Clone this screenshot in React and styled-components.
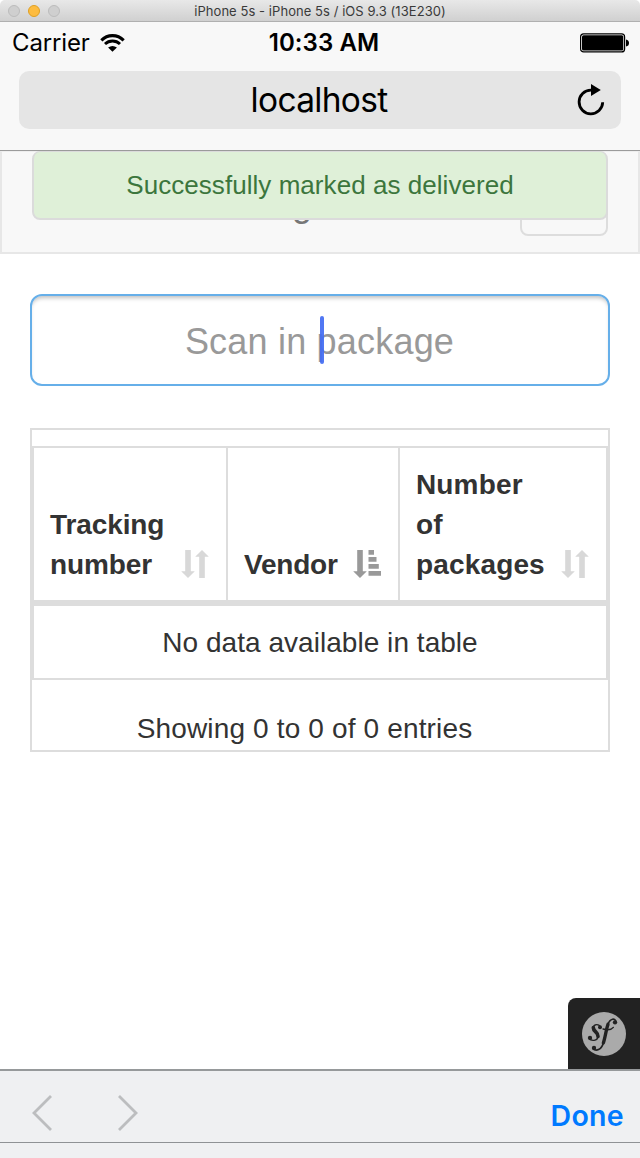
import React from "react";
import styled, { createGlobalStyle } from "styled-components";

const GlobalStyle = createGlobalStyle`
  * { box-sizing: border-box; }
  body { margin: 0; background: #fff; }
`;

const system = `Inter, "Liberation Sans", sans-serif`;
const helvetica = `"Liberation Sans", Arial, sans-serif`;

const Device = styled.main`
  width: 640px;
  height: 1158px;
  display: flex;
  flex-direction: column;
  overflow: hidden;
  background: #fff;
  color: #333;
  font-family: ${helvetica};
  white-space: nowrap;
`;

const TitleBar = styled.header`
  height: 22px;
  flex: none;
  display: grid;
  grid-template-columns: 68px 1fr 76px;
  align-items: center;
  padding: 1px 0 0 8px;
  border-bottom: 1px solid #b0b0b0;
  border-radius: 5px 5px 0 0;
  background: linear-gradient(#e8e8e8, #d0d0d0);
`;

const Lights = styled.div`
  display: flex;
  gap: 8px;
`;

const Light = styled.span`
  width: 12px;
  height: 12px;
  border-radius: 50%;
  border: 1px solid ${(p) => (p.$on ? "#dfa023" : "#bcbcbc")};
  background: ${(p) => (p.$on ? "#fdbc40" : "#cfcfcf")};
`;

const WindowTitle = styled.div`
  text-align: center;
  font: 400 13px/20px ${system};
  letter-spacing: 0.06px;
  color: #3a3a3a;
`;

const StatusBar = styled.div`
  height: 42px;
  flex: none;
  display: grid;
  grid-template-columns: 1fr auto 1fr;
  align-items: center;
  padding: 0 11px 0 12px;
  background: #f8f8f8;
  color: #000;
  font: 400 24px/42px ${system};
`;

const Carrier = styled.div`
  display: flex;
  align-items: center;
  gap: 10px;
  letter-spacing: -0.15px;
  svg { margin-bottom: 1px; }
`;

const Clock = styled.div`
  margin-left: 7px;
  font-weight: 600;
  letter-spacing: 0.1px;
`;

const Battery = styled.svg`
  justify-self: end;
`;

const AddressArea = styled.div`
  height: 87px;
  flex: none;
  padding: 7px 19px 0;
  background: #f8f8f8;
  border-bottom: 1px solid #9b9b9b;
`;

const AddressField = styled.div`
  height: 58px;
  display: grid;
  grid-template-columns: 60px 1fr 60px;
  align-items: center;
  border-radius: 10px;
  background: #e5e5e5;
  color: #000;
  svg { justify-self: end; margin: 0 16px 1px 0; }
`;

const Host = styled.div`
  grid-column: 2;
  text-align: center;
  font: 400 33.5px/58px ${system};
  letter-spacing: -0.7px;
  padding-right: 2px;
`;

const Page = styled.section`
  position: relative;
  height: 918px;
  flex: none;
  overflow: hidden;
`;

const Navbar = styled.nav`
  height: 103px;
  display: grid;
  grid-template-columns: 1fr auto 1fr;
  align-items: start;
  padding: 0 30px;
  border: 2px solid #e7e7e7;
  border-top: 1px solid #eee;
  background: #f8f8f8;
`;

const Brand = styled.span`
  grid-column: 2;
  margin: 28px 36px 0 0;
  font-size: 36px;
  line-height: 48px;
  color: #777;
`;

const NavToggle = styled.span`
  justify-self: end;
  width: 88px;
  height: 68px;
  margin-top: 16px;
  border: 2px solid #ddd;
  border-radius: 8px;
`;

const Alert = styled.div`
  position: absolute;
  top: 0;
  left: 32px;
  right: 32px;
  height: 69px;
  border: 2px solid #dbdbdb;
  border-top-width: 1px;
  border-radius: 8px;
  background: #dff0d8;
  color: #3c763d;
  text-align: center;
  font-size: 26px;
  line-height: 67px;
  letter-spacing: 0.05px;
`;

const ScanField = styled.div`
  position: relative;
  height: 92px;
  margin: 40px 30px 42px;
  border: 2px solid #66afe9;
  border-radius: 12px;
  box-shadow: inset 0 4px 4px -2px rgba(0, 0, 0, 0.25);
  color: #999;
  text-align: center;
  font-size: 36px;
  line-height: 92px;
  letter-spacing: 0.2px;
  padding-right: 1px;
`;

const Caret = styled.span`
  position: absolute;
  left: 288px;
  top: 20px;
  width: 4px;
  height: 48px;
  border-radius: 2px;
  background: rgba(66, 107, 242, 0.92);
`;

const TablePanel = styled.div`
  height: 324px;
  margin: 0 30px;
  padding-top: 16px;
  border: 2px solid #ddd;
`;

const Table = styled.div`
  border: 2px solid #ddd;
`;

const HeadRow = styled.div`
  display: grid;
  grid-template-columns: 194px 172px 206px;
  height: 158px;
  border-bottom: 6px solid #ddd;
`;

const HeadCell = styled.div`
  display: flex;
  align-items: flex-end;
  justify-content: space-between;
  padding: 0 ${(p) => (p.$last ? 17.5 : 17.5)}px 15px 16px;
  border-right: ${(p) => (p.$last ? 0 : 2)}px solid #ddd;
  font-size: 28px;
  font-weight: 700;
  line-height: 40px;
  letter-spacing: ${(p) => p.$track || "0"};
  svg { margin-bottom: 7px; flex: none; }
`;

const EmptyRow = styled.div`
  height: 72px;
  text-align: center;
  font-size: 28px;
  line-height: 73px;
  letter-spacing: 0.04px;
`;

const TableInfo = styled.div`
  padding-right: 31px;
  text-align: center;
  font-size: 28px;
  line-height: 98px;
  letter-spacing: 0.15px;
`;

const DebugBadge = styled.div`
  position: absolute;
  right: 0;
  bottom: 0;
  width: 72px;
  height: 71px;
  display: grid;
  place-items: center;
  border-radius: 8px 0 0 0;
  background: #222;
`;

const FormBar = styled.div`
  height: 74px;
  flex: none;
  display: flex;
  align-items: center;
  padding: 12px 16px 0 32px;
  border-top: 2px solid #96999b;
  border-bottom: 1px solid #8f9295;
  background: #eff0f2;
`;

const Arrow = styled.svg`
  margin-right: 66px;
`;

const Done = styled.span`
  margin-left: auto;
  padding-top: 6px;
  color: #007aff;
  font: 600 28.5px/40px ${system};
  letter-spacing: 0.3px;
`;

const KeyboardEdge = styled.div`
  flex: 1;
  background: #eff0f2;
`;

function SortIcon() {
  return (
    <svg width="28" height="28" viewBox="0 0 28 28" fill="#d8d8d8">
      <path d="M4.2 0h5.6v21.3h4L7 28 .2 21.3h4zM21 0l6.8 6.7h-4V28h-5.6V6.7h-4z" />
    </svg>
  );
}

function SortedIcon() {
  return (
    <svg width="28" height="28" viewBox="0 0 28 28" fill="#999">
      <path d="M4.2 0h5.6v21.3h4L7 28 .2 21.3h4zM15.5 0h5.5v4.7h-5.5zM15.5 7h8v4.7h-8zM15.5 14h10.3v4.7H15.5zM15.5 21H28v4.7H15.5z" />
    </svg>
  );
}

function WifiIcon() {
  return (
    <svg width="25" height="20" viewBox="0 0 26 20" fill="none" stroke="#000">
      <path d="M1.4 7.2C7.8.7 18.2.7 24.6 7.2" strokeWidth="3.2" />
      <path d="M5.2 11.1c4.3-4.2 11.3-4.2 15.6 0" strokeWidth="3" />
      <path d="M13 19l-4.6-4.4q4.6-3.2 9.2 0z" fill="#000" stroke="none" />
    </svg>
  );
}

function ReloadIcon() {
  return (
    <svg width="28" height="32" viewBox="0 0 28 32">
      <path d="M14 6.2A11.8 11.8 0 1 0 25.7 18.3" fill="none" stroke="#000" strokeWidth="2.8" />
      <path d="M14 0l9.8 6L14 12z" />
    </svg>
  );
}

function SymfonyLogo() {
  return (
    <svg width="44" height="44" viewBox="18 18 132 132" fill="none" stroke="#222" strokeLinecap="round">
      <circle cx="84" cy="84" r="66" fill="#aaa" stroke="none" />
      <path d="M73 64C70 53 53 53 52 65" strokeWidth="4" />
      <path d="M52 65C52 77 67 79 66 91" strokeWidth="11" />
      <path d="M66 91C65 106 44 106 41 97" strokeWidth="4" />
      <path d="M120 48C118 35 102 37 96 55" strokeWidth="5" />
      <path d="M96 55C90 72 88 94 82 111" strokeWidth="10" />
      <path d="M82 111C76 132 60 137 51 128" strokeWidth="5" />
      <path d="M81 69C92 72 106 72 112 64" strokeWidth="4" />
      <g fill="#222" stroke="none">
        <circle cx="72" cy="64" r="6" />
        <circle cx="42" cy="96" r="6.5" />
        <circle cx="117" cy="49" r="6.5" />
        <circle cx="54" cy="126" r="6.5" />
      </g>
    </svg>
  );
}

export default function App() {
  return (
    <Device>
      <GlobalStyle />
      <TitleBar>
        <Lights><Light /><Light $on /><Light /></Lights>
        <WindowTitle>iPhone 5s - iPhone 5s / iOS 9.3 (13E230)</WindowTitle>
      </TitleBar>
      <StatusBar>
        <Carrier><span>Carrier</span><WifiIcon /></Carrier>
        <Clock>10:33 AM</Clock>
        <Battery width="49" height="20" viewBox="0 0 49 20">
          <rect x=".6" y=".9" width="44" height="18" rx="3" fill="none" stroke="#000" strokeWidth="1.2" />
          <rect x="2" y="2.3" width="41.3" height="15.2" rx="1.5" />
          <path d="M46 6.5q3 .5 3 3.5t-3 3.5z" />
        </Battery>
      </StatusBar>
      <AddressArea>
        <AddressField>
          <Host>localhost</Host>
          <ReloadIcon />
        </AddressField>
      </AddressArea>
      <Page>
        <Navbar>
          <Brand>g</Brand>
          <NavToggle />
        </Navbar>
        <Alert>Successfully marked as delivered</Alert>
        <ScanField>Scan in package<Caret /></ScanField>
        <TablePanel>
          <Table>
            <HeadRow>
              <HeadCell $track="-0.1px"><span>Tracking<br />number</span><SortIcon /></HeadCell>
              <HeadCell $track="-0.2px"><span>Vendor</span><SortedIcon /></HeadCell>
              <HeadCell $last $track="0.15px"><span>Number<br />of<br />packages</span><SortIcon /></HeadCell>
            </HeadRow>
            <EmptyRow>No data available in table</EmptyRow>
          </Table>
          <TableInfo>Showing 0 to 0 of 0 entries</TableInfo>
        </TablePanel>
        <DebugBadge><SymfonyLogo /></DebugBadge>
      </Page>
      <FormBar>
        <Arrow width="20" height="36" viewBox="0 0 20 36" fill="none" stroke="#bcbdbf" strokeWidth="2.8"><path d="M19 1L2 18l17 17" /></Arrow>
        <Arrow width="20" height="36" viewBox="0 0 20 36" fill="none" stroke="#bcbdbf" strokeWidth="2.8"><path d="M1 1l17 17L1 35" /></Arrow>
        <Done>Done</Done>
      </FormBar>
      <KeyboardEdge />
    </Device>
  );
}
